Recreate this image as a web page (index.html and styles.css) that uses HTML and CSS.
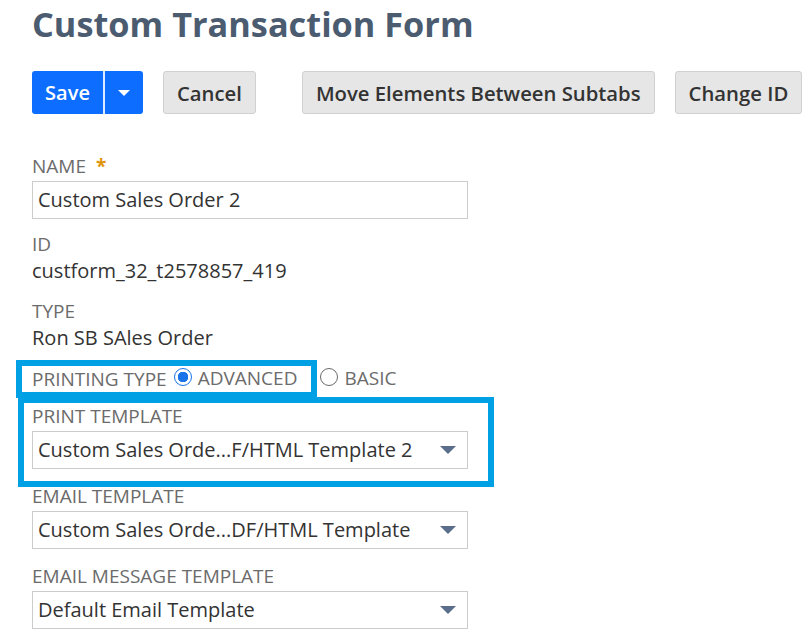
FILE: index.html
```html
<!DOCTYPE html>
<html lang="en">
<head>
    <meta charset="UTF-8">
    <title>Custom Transaction Form</title>
    <link rel="stylesheet" href="styles.css">
</head>
<body>
<div class="page">
    <h1 class="title">Custom Transaction Form</h1>

    <div class="toolbar">
        <div class="split-btn">
            <button class="btn-primary" type="button">Save</button>
            <button class="btn-primary btn-caret" type="button"><span class="caret-white"></span></button>
        </div>
        <button class="btn" type="button">Cancel</button>
        <span class="toolbar-sep"></span>
        <button class="btn" type="button">Move Elements Between Subtabs</button>
        <button class="btn" type="button">Change ID</button>
    </div>

    <div class="form">
        <div class="field field-name">
            <div class="label">NAME <span class="required">*</span></div>
            <div class="input">Custom Sales Order 2</div>
        </div>
        <div class="field field-info">
            <div class="label">ID</div>
            <div class="value">custform_32_t2578857_419</div>
        </div>
        <div class="field field-info">
            <div class="label">TYPE</div>
            <div class="value">Ron SB SAles Order</div>
        </div>
        <div class="field-inline">
            <span class="label">PRINTING TYPE</span>
            <span class="radio radio-on"></span>
            <span class="radio-text">ADVANCED</span>
            <span class="radio"></span>
            <span class="radio-text">BASIC</span>
            <span class="mark mark-type"></span>
        </div>
        <div class="field">
            <div class="label">PRINT TEMPLATE</div>
            <div class="input select">Custom Sales Orde...F/HTML Template 2 <span class="caret"></span></div>
            <span class="mark mark-template"></span>
        </div>
        <div class="field">
            <div class="label">EMAIL TEMPLATE</div>
            <div class="input select">Custom Sales Orde...DF/HTML Template <span class="caret"></span></div>
        </div>
        <div class="field">
            <div class="label">EMAIL MESSAGE TEMPLATE</div>
            <div class="input select">Default Email Template <span class="caret"></span></div>
        </div>
    </div>
</div>
</body>
</html>
```

FILE: styles.css
```css
body {
    font-family: "Open Sans", "Liberation Sans", sans-serif;
    margin: 0;
    padding: 0;
    background-color: #fff;
    color: #333;
}
.page {
    padding: 0 0 0 32px;
}
.title {
    margin: 0;
    font-size: 34.3px;
    font-weight: bold;
    line-height: 48px;
    color: #4b5b70;
}
.toolbar {
    display: flex;
    align-items: center;
    margin-top: 23px;
}
.split-btn {
    display: flex;
    margin-right: 20px;
}
.btn-primary {
    height: 43px;
    border: none;
    background-color: #0c6dff;
    color: #fff;
    font-family: inherit;
    font-size: 20px;
    font-weight: 600;
    padding: 0 12px;
    width: 71px;
    border-radius: 3px 0 0 3px;
}
.btn-caret {
    width: 40px;
    padding: 0;
    border-left: 2px solid #dce9ff;
    border-radius: 0 3px 3px 0;
    display: flex;
    align-items: center;
    justify-content: center;
}
.caret-white {
    width: 0;
    height: 0;
    border-left: 6px solid transparent;
    border-right: 6px solid transparent;
    border-top: 6px solid #fff;
}
.btn {
    height: 43px;
    border: 1px solid #d0d0d0;
    background-color: #e6e6e6;
    color: #333;
    font-family: inherit;
    font-size: 20.3px;
    font-weight: 600;
    padding: 0 13px;
    border-radius: 3px;
    margin-right: 20px;
    white-space: nowrap;
}
.toolbar-sep {
    width: 1px;
    height: 36px;
    background-color: #cfcfcf;
    margin: 0 25px 0 1px;
}
.form {
    margin-top: 39px;
    width: 436px;
}
.field {
    position: relative;
    margin-bottom: 14px;
}
.field-name {
    margin-bottom: 12px;
}
.field-info {
    margin-bottom: 13px;
}
.label {
    font-size: 19px;
    line-height: 26px;
    color: #6b6b6b;
}
.required {
    color: #e0940c;
    font-weight: bold;
    margin-left: 5px;
}
.value {
    font-size: 20px;
    line-height: 28px;
    color: #333;
}
.input {
    box-sizing: border-box;
    height: 38px;
    border: 1px solid #cccccc;
    padding: 0 0 0 5px;
    font-size: 20px;
    line-height: 36px;
    color: #333;
    margin-top: 2px;
}
.select {
    display: flex;
    justify-content: space-between;
    align-items: center;
    padding-right: 11px;
}
.caret {
    width: 0;
    height: 0;
    border-left: 8px solid transparent;
    border-right: 8px solid transparent;
    border-top: 8px solid #5a6e8a;
}
.field-inline {
    position: relative;
    display: flex;
    align-items: center;
    height: 28px;
    margin-bottom: 10px;
}
.radio {
    box-sizing: border-box;
    width: 18px;
    height: 18px;
    border: 1px solid #6b6b6b;
    border-radius: 50%;
    margin: 0 6px 0 7px;
    position: relative;
    top: -2px;
}
.radio-on {
    border: 1.5px solid #1a73e8;
    background: radial-gradient(circle, #1a73e8 0 5px, #fff 5.5px);
}
.radio-text {
    font-size: 19px;
    color: #6b6b6b;
    position: relative;
    top: -1px;
}
.radio-text + .radio {
    margin-left: 23px;
}
.mark {
    position: absolute;
    border: 6px solid #00a0e4;
}
.mark-type {
    left: -16px;
    top: -5px;
    width: 289px;
    height: 26px;
}
.mark-template {
    left: -14px;
    top: -6px;
    width: 464px;
    height: 78px;
}
```
